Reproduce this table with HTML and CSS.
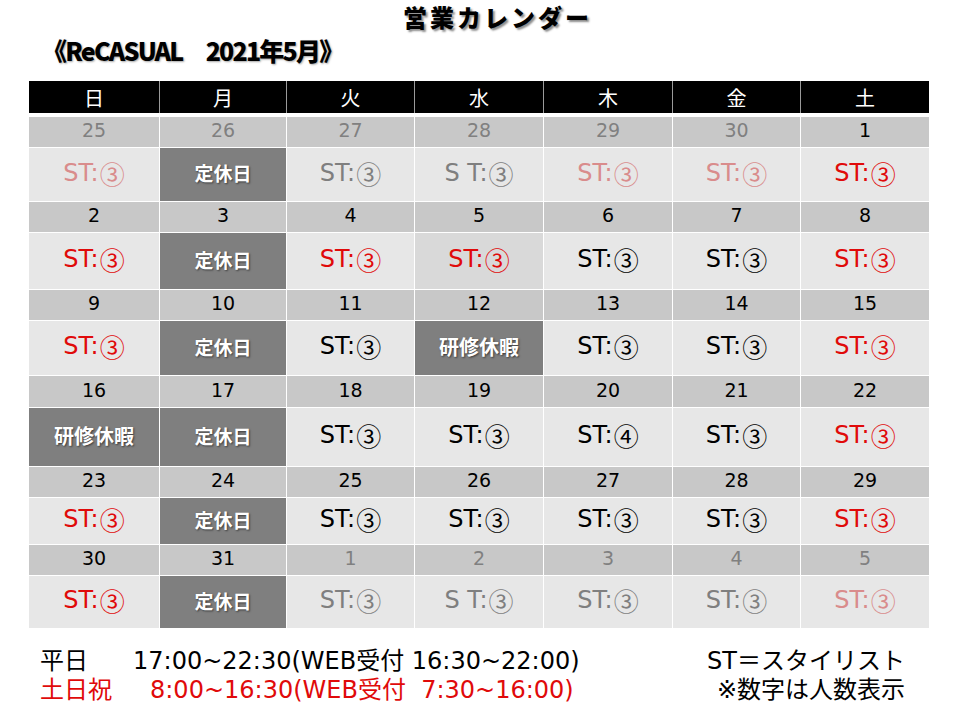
FILE: index.html
```html
<!DOCTYPE html>
<html lang="ja">
<head>
<meta charset="utf-8">
<title>営業カレンダー</title>
<link rel="stylesheet" href="styles.css">
</head>
<body>
<div class="page">
  <h1 class="title">営業カレンダー</h1>
  <div class="sub">《ReCASUAL　2021年5月》</div>

  <div class="head">
    <div>日</div><div>月</div><div>火</div><div>水</div><div>木</div><div>金</div><div>土</div>
  </div>

  <div class="cal">
    <div class="d g">25</div><div class="d g">26</div><div class="d g">27</div><div class="d g">28</div><div class="d g">29</div><div class="d g">30</div><div class="d">1</div>
    <div class="c pink">ST:<span class="n">③</span></div>
    <div class="c off">定休日</div>
    <div class="c gray">ST:<span class="n">③</span></div>
    <div class="c gray">S T:<span class="n">③</span></div>
    <div class="c pink">ST:<span class="n">③</span></div>
    <div class="c pink">ST:<span class="n">③</span></div>
    <div class="c red">ST:<span class="n">③</span></div>

    <div class="d">2</div><div class="d">3</div><div class="d">4</div><div class="d">5</div><div class="d">6</div><div class="d">7</div><div class="d">8</div>
    <div class="c red">ST:<span class="n">③</span></div>
    <div class="c off">定休日</div>
    <div class="c red">ST:<span class="n">③</span></div>
    <div class="c red shade">ST:<span class="n">③</span></div>
    <div class="c">ST:<span class="n">③</span></div>
    <div class="c">ST:<span class="n">③</span></div>
    <div class="c red">ST:<span class="n">③</span></div>

    <div class="d">9</div><div class="d">10</div><div class="d">11</div><div class="d">12</div><div class="d">13</div><div class="d">14</div><div class="d">15</div>
    <div class="c red">ST:<span class="n">③</span></div>
    <div class="c off">定休日</div>
    <div class="c">ST:<span class="n">③</span></div>
    <div class="c off wide">研修休暇</div>
    <div class="c">ST:<span class="n">③</span></div>
    <div class="c">ST:<span class="n">③</span></div>
    <div class="c red">ST:<span class="n">③</span></div>

    <div class="d">16</div><div class="d">17</div><div class="d">18</div><div class="d">19</div><div class="d">20</div><div class="d">21</div><div class="d">22</div>
    <div class="c off wide">研修休暇</div>
    <div class="c off">定休日</div>
    <div class="c">ST:<span class="n">③</span></div>
    <div class="c">ST:<span class="n">③</span></div>
    <div class="c">ST:<span class="n">④</span></div>
    <div class="c">ST:<span class="n">③</span></div>
    <div class="c red">ST:<span class="n">③</span></div>

    <div class="d">23</div><div class="d">24</div><div class="d">25</div><div class="d">26</div><div class="d">27</div><div class="d">28</div><div class="d">29</div>
    <div class="c red">ST:<span class="n">③</span></div>
    <div class="c off">定休日</div>
    <div class="c">ST:<span class="n">③</span></div>
    <div class="c">ST:<span class="n">③</span></div>
    <div class="c">ST:<span class="n">③</span></div>
    <div class="c">ST:<span class="n">③</span></div>
    <div class="c red">ST:<span class="n">③</span></div>

    <div class="d">30</div><div class="d">31</div><div class="d g">1</div><div class="d g">2</div><div class="d g">3</div><div class="d g">4</div><div class="d g">5</div>
    <div class="c red">ST:<span class="n">③</span></div>
    <div class="c off">定休日</div>
    <div class="c gray">ST:<span class="n">③</span></div>
    <div class="c gray">S T:<span class="n">③</span></div>
    <div class="c gray">ST:<span class="n">③</span></div>
    <div class="c gray">ST:<span class="n">③</span></div>
    <div class="c pink">ST:<span class="n">③</span></div>
  </div>

  <div class="foot">
    <div class="hours">
      <div class="lbl">平日</div><div class="time">17:00~22:30(WEB受付 16:30~22:00)</div>
      <div class="lbl hol">土日祝</div><div class="time hol t2">8:00~16:30(WEB受付&nbsp;&nbsp;7:30~16:00)</div>
    </div>
    <div class="note">
      <div>ST＝スタイリスト</div>
      <div>※数字は人数表示</div>
    </div>
  </div>
</div>
</body>
</html>
```

FILE: styles.css
```css
html, body {
  margin: 0;
  padding: 0;
  background: #ffffff;
}

body {
  font-family: "DejaVu Sans", "Noto Sans CJK JP", sans-serif;
  color: #000000;
}

.page {
  width: 960px;
  height: 720px;
  overflow: hidden;
}

.title {
  margin: 0;
  padding-left: 403px;
  height: 34px;
  line-height: 34px;
  font-family: "Noto Sans CJK JP", sans-serif;
  font-size: 24px;
  font-weight: 900;
  letter-spacing: 3px;
  text-shadow: 2px 2px 2px rgba(0, 0, 0, 0.45);
}

.sub {
  padding-left: 42px;
  height: 34px;
  line-height: 32px;
  font-family: "Noto Sans CJK JP", sans-serif;
  font-size: 25px;
  font-weight: 900;
  letter-spacing: -1.8px;
  text-shadow: 1px 1px 2px rgba(0, 0, 0, 0.35);
}

.head,
.cal {
  margin-left: 29px;
  width: 900px;
  display: grid;
  grid-template-columns: 130px 126px 127px 128px 128px 127px 128px;
  column-gap: 1px;
}

.head {
  margin-top: 13px;
  background: #9a9a9a;
  height: 32px;
}

.head > div {
  background: #000000;
  color: #ffffff;
  font-family: "Noto Sans CJK JP", sans-serif;
  font-size: 20px;
  display: flex;
  align-items: center;
  justify-content: center;
}

.cal {
  margin-top: 4px;
  row-gap: 1px;
  grid-template-rows: 30px 53px 30px 56px 30px 54px 31px 58px 30px 46px 30px 52px;
}

.d {
  background: #c8c8c8;
  font-size: 19px;
  display: flex;
  align-items: center;
  justify-content: center;
  padding-bottom: 4px;
  box-sizing: border-box;
}

.d.g {
  color: #808080;
}

.c {
  background: #e7e7e7;
  font-size: 24px;
  display: flex;
  align-items: center;
  justify-content: center;
  padding-bottom: 4px;
  box-sizing: border-box;
}

.c .n {
  font-family: "Noto Sans CJK JP", sans-serif;
  font-size: 25px;
  margin-left: 1px;
}

.c.shade {
  background: #d9d9d9;
}

.red {
  color: #e00a0a;
}

.pink {
  color: #d98c8c;
}

.gray {
  color: #7f7f7f;
}

.c.off {
  background: #7f7f7f;
  color: #ffffff;
  font-family: "Noto Sans CJK JP", sans-serif;
  font-weight: 700;
  font-size: 19px;
  text-shadow: 1px 1px 2px rgba(0, 0, 0, 0.55);
}

.c.off.wide {
  font-size: 20px;
}

.foot {
  margin-top: 19px;
  padding: 0 55px 0 40px;
  display: flex;
  justify-content: space-between;
  font-size: 24px;
  line-height: 29px;
}

.hours {
  display: grid;
  grid-template-columns: 93px auto;
}

.hol {
  color: #e00a0a;
}

.t2 {
  padding-left: 17px;
}

.note {
  text-align: right;
}
```
